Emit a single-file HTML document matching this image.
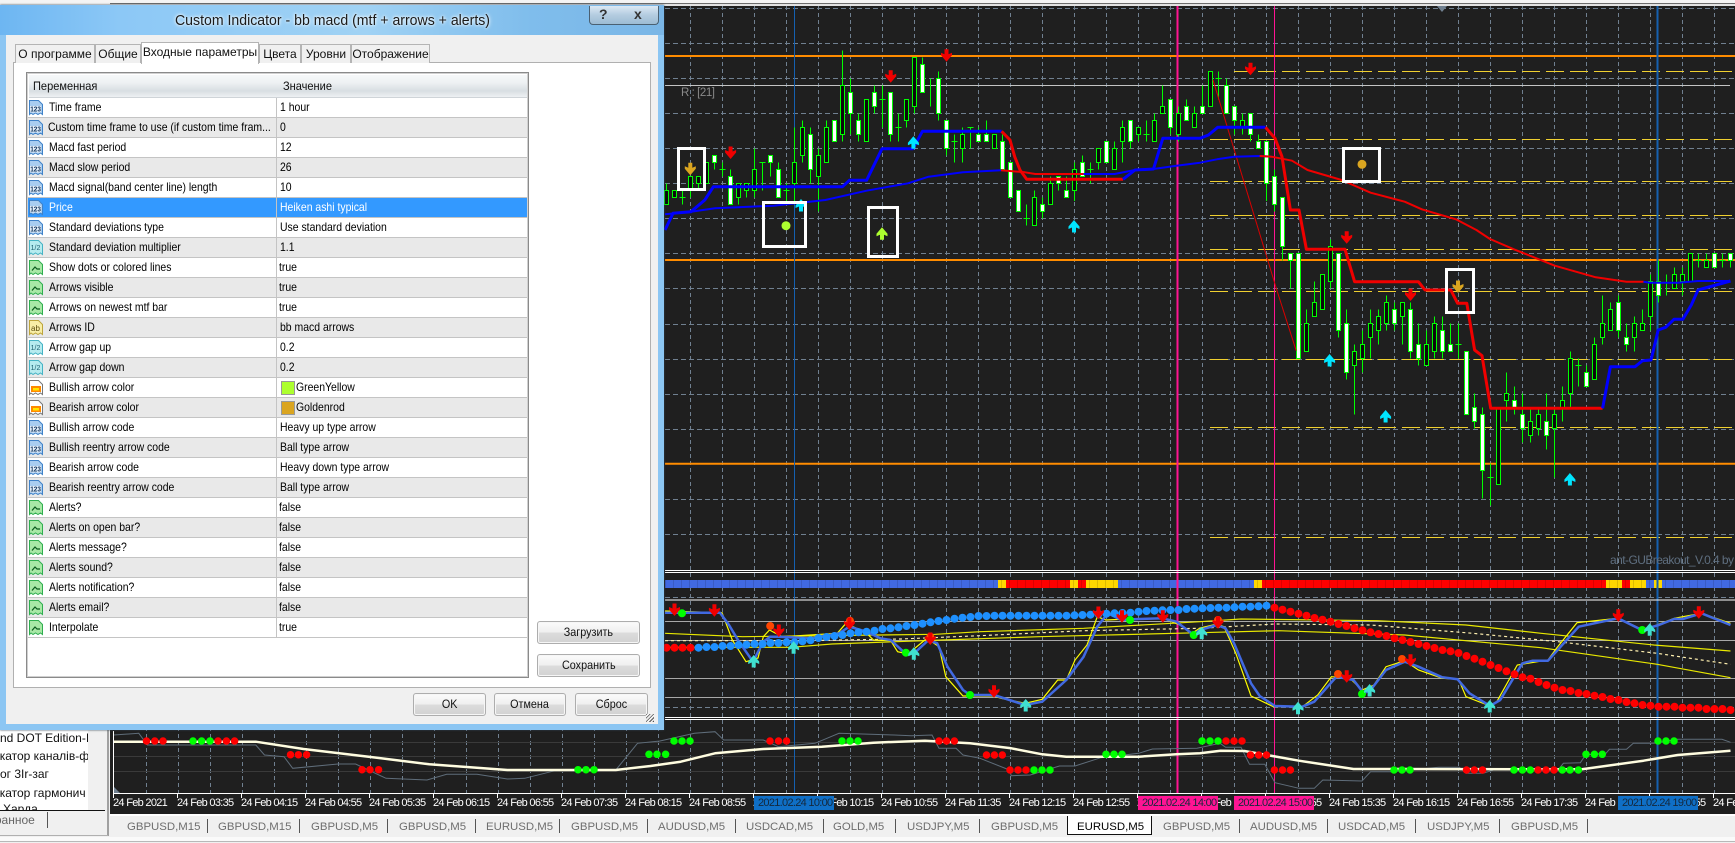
<!DOCTYPE html>
<html><head><meta charset="utf-8"><title>Custom Indicator</title>
<style>
html,body{margin:0;padding:0;width:1735px;height:843px;overflow:hidden;background:#f0f0f0;font-family:"Liberation Sans","Noto Sans CJK SC",sans-serif}
.a{position:absolute}
#dlg{position:absolute;left:0;top:5px;width:664px;height:725px;background:#8cc6f3;box-shadow:0 0 2px #345}
#tb{position:absolute;left:0;top:0;width:664px;height:30px;background:linear-gradient(90deg,#6db6f2 0,#8cc8f6 18%,#a0d2f4 55%,#7fbdec 80%,#7ab6e6 100%)}
#ttl{position:absolute;left:175px;top:6px;font-size:15px;line-height:20px;color:#1a1a1a;white-space:nowrap;transform:scaleX(.94);transform-origin:0 0;text-shadow:0 0 5px #fff,0 0 3px #fff}
#hb{position:absolute;left:589px;top:1px;width:68px;height:18px;border:1px solid #4a6072;border-top:none;border-radius:0 0 4px 4px;background:linear-gradient(#dce9f4,#b4cce0 50%,#9cbcd4);font:bold 14px/17px "Liberation Sans",sans-serif;color:#333}
#cl{position:absolute;left:6px;top:30px;width:652px;height:689px;background:#f0f0f0}
.tab{position:absolute;top:9px;height:18px;background:#f0f0f0;border:1px solid #b4b4b4;border-bottom:none;font-size:12px;line-height:18px;color:#111;text-align:center;white-space:nowrap}
#pane{position:absolute;left:7px;top:27px;width:636px;height:624px;background:#fff;border:1px solid #b0b0b0}
#tbl{position:absolute;left:12px;top:9px;width:501px;height:604px;border:1px solid #8a8a8a;outline:1px solid #d0d0d0;outline-offset:-2px;background:#fff;overflow:hidden}
#hd{position:absolute;left:2px;top:2px;width:498px;height:22px;background:linear-gradient(#f6f8f9,#eef1f3 35%,#d8dee2 72%,#eef1f3);border-bottom:1px solid #cfd4d8}
#hd span{position:absolute;top:3px;font-size:12px;line-height:17px;color:#111;transform:scaleX(.92);transform-origin:0 0}
#rows{position:absolute;left:1px;top:25px;width:499px}
.r{position:relative;height:19px;border-bottom:1px solid #c4c4c4;background:#fff;overflow:hidden}
.r.e{background:#e9e9e9}
.r.s{background:#3399ff;color:#fff}
.r i{position:absolute;left:248px;top:0;width:1px;height:20px;background:#c4c4c4}
.r svg{position:absolute;left:0;top:2px;width:16px;height:16px}
.r b,.r u{position:absolute;font-weight:normal;text-decoration:none;font-size:12px;line-height:19px;color:#000;white-space:nowrap;transform:scaleX(.87);transform-origin:0 0}
.r.s b,.r.s u{color:#fff}
.r b{left:21px}
.r u{left:252px}
.r u.f{left:251px}
.r u.c{left:268px}
.r em{position:absolute;left:253px;top:3px;width:12px;height:12px;border:1px solid #999}
.btn{position:absolute;background:linear-gradient(#fbfbfb,#efefef 48%,#dcdcdc 52%,#d2d2d2);border:1px solid #adadad;border-radius:3px;font-size:12px;color:#111;text-align:center;box-shadow:inset 0 0 0 1px #f6f6f6}
.btn span{display:inline-block;transform:scaleX(.9)}
#grip{position:absolute;left:640px;top:679px;width:8px;height:8px;background:repeating-linear-gradient(135deg,#555 0 1px,#f0f0f0 1px 2.5px)}
.nav{position:absolute;font-size:12px;line-height:16px;color:#111;white-space:nowrap}
.tl{position:absolute;top:818px;font-size:11.4px;line-height:18px;color:#6e6e6e;white-space:nowrap}
.sp{position:absolute;top:819px;width:1px;height:14px;background:#555}
svg text{font-family:"Liberation Sans",sans-serif}
</style></head><body>

<!-- top strip and left panel -->
<div class="a" style="left:0;top:0;width:1735px;height:2.5px;background:#f4f4f4"></div>
<div class="a" style="left:110px;top:2.5px;width:1625px;height:1.5px;background:#6c6c6c"></div>
<div class="a" style="left:110px;top:4px;width:1625px;height:2px;background:#e2e2e2"></div>
<div class="a" style="left:0;top:730px;width:88px;height:80px;background:#fff;overflow:hidden">
<div class="nav" style="left:0;top:0">nd DOT Edition-I</div>
<div class="nav" style="left:-7px;top:18px">икатор каналів-фо</div>
<div class="nav" style="left:0;top:36px">ог 3Ir-заг</div>
<div class="nav" style="left:-7px;top:55px">икатор гармонич</div>
<div class="nav" style="left:3px;top:71px">Харда</div>
</div>
<div class="a" style="left:0;top:810px;width:105px;height:1px;background:#111"></div>
<div class="nav" style="left:-12px;top:812px;color:#666">бранное</div>
<div class="a" style="left:47px;top:812px;width:1px;height:16px;background:#555"></div>
<div class="a" style="left:107px;top:730px;width:2px;height:106px;background:#a0a0a0"></div>
<div class="a" style="left:0;top:835px;width:108px;height:1px;background:#b0b0b0"></div>

<!-- chart -->
<svg class="a" style="left:0;top:0" width="1735" height="843" viewBox="0 0 1735 843">
<defs>
<pattern id="vg" patternUnits="userSpaceOnUse" x="146" y="6" width="32" height="7"><rect width="1" height="4" fill="#708090"/></pattern>
<pattern id="tk" patternUnits="userSpaceOnUse" x="113" y="793" width="64" height="5"><rect width="1" height="5" fill="#fff"/></pattern>
<pattern id="bk" patternUnits="userSpaceOnUse" x="665" y="580" width="8" height="8"><rect width="1" height="8" fill="#000" fill-opacity=".13"/></pattern>
<path id="d" d="M-2-6.500h4v5l3.500-1.500v2.500l-5.500 6.500-5.500-6.500v-2.500l3.500 1.500z"/>
<path id="up" d="M-2 6.500h4v-5l3.500 1.500v-2.500l-5.500-6.500-5.500 6.500v2.500l3.500-1.500z"/>
</defs>
<rect x="110" y="6" width="1625" height="808" fill="#1f1f1f"/>
<rect x="146" y="6" width="1589" height="787" fill="url(#vg)"/>
<path d="M665 8.500H1735M665 43.500H1735M665 78.500H1735M665 113.500H1735M665 148.500H1735M665 183.500H1735M665 218.500H1735M665 253.500H1735M665 288.500H1735M665 324.500H1735M665 359.500H1735M665 394.500H1735M665 429.500H1735M665 499.500H1735M665 534.500H1735M665 597.500H1735M665 707.500H1735" stroke="#708090" stroke-width="1" stroke-dasharray="5 3" fill="none"/>
<path d="M113 742.500H1735M113 756.500H1735M113 771.500H1735" stroke="#3a3a3a" fill="none"/>
<path d="M665 621.500H1735M665 640.500H1735M665 678.500H1735M665 697.500H1735" stroke="#a8a8a8" fill="none"/>
<path d="M1234 71.500H1732M1210 139.500H1732M1210 181.500H1732M1210 215.500H1732M1210 249.500H1732M1210 291.500H1732M1210 359.500H1732M1210 427.500H1732M1210 537.500H1732" stroke="#f0d030" stroke-dasharray="18 6" fill="none"/>
<path d="M665 56H1735M665 260H1735M665 463.700H1735" stroke="#ff8c00" stroke-width="2" fill="none"/>
<path d="M665 85.500H1730" stroke="#c4c4c4" fill="none"/>
<path d="M794.500 6V793" stroke="#1560b0" fill="none"/>
<path d="M1657.500 6V793" stroke="#1560b0" stroke-width="2" fill="none"/>
<path d="M1177.500 6V793" stroke="#ff1493" stroke-width="2" fill="none"/>
<path d="M1274.500 6V793" stroke="#ff1493" fill="none"/>
<path d="M1442 6h-5l5 6 5-6z" fill="#708090"/>

<!-- candles: y in price steps -->
<g transform="translate(0 50.5) scale(1 7)" shape-rendering="crispEdges">
<path vector-effect="non-scaling-stroke" fill="none" stroke="#0f0" d="M666.500 19V22M674.500 20V21M682.500 20V22M679.500 21H685.500M690.500 18V21M698.500 18V20M706.500 16V19M714.500 15V17M722.500 16V18M719.500 17H725.500M730.500 17V22M738.500 19V22M746.500 19V21M754.500 14V21M762.500 16V20M759.500 16H765.500M770.500 15V18M778.500 16V21M786.500 19V22M783.500 20H789.500M794.500 11V22M802.500 10V16M810.500 11V19M818.500 14V23M826.500 10V16M834.500 10V13M842.500 0V13M850.500 4V12M858.500 9V13M866.500 7V13M874.500 5V9M882.500 5V11M879.500 7H885.500M890.500 6V13M898.500 9V13M895.500 11H901.500M906.500 7V11M914.500 1V9M922.500 1V6M930.500 4V8M938.500 3V10M946.500 10V15M954.500 12V16M951.500 13H957.500M962.500 11V16M970.500 11V14M967.500 11H973.500M978.500 11V13M986.500 10V13M994.500 12V14M1002.500 12V17M1010.500 16V21M1018.500 20V23M1026.500 22V25M1023.500 24H1029.500M1034.500 20V25M1042.500 21V24M1050.500 18V22M1058.500 18V20M1066.500 18V21M1074.500 16V21.500M1082.500 15V18M1090.500 16V19M1087.500 17H1093.500M1098.500 14V17M1106.500 13V16M1114.500 13V17M1122.500 10V16M1130.500 10V14M1138.500 11V13M1146.500 10V13M1143.500 12H1149.500M1154.500 9V13M1162.500 5V9M1170.500 7V12M1178.500 8V13M1186.500 7V10M1194.500 8V11M1202.500 5V9M1210.500 3V8M1218.500 3V7M1215.500 4H1221.500M1226.500 4V9M1234.500 8V12M1242.500 9V12M1250.500 9V13M1258.500 12V14M1266.500 13V21.500M1274.500 17V23M1282.500 21V30M1290.500 29V34M1298.500 29V44M1306.500 37V43M1314.500 33V38M1322.500 32V37M1330.500 27V34M1338.500 29V41M1346.500 37V47M1354.500 42V52M1362.500 40V46M1370.500 37V44M1378.500 37V42M1386.500 35V40M1394.500 36V40M1402.500 36V42M1410.500 36V44M1418.500 39V45M1426.500 40V45M1434.500 38V44M1442.500 38V44M1450.500 39V43M1458.500 39V44M1455.500 42H1461.500M1466.500 43V52M1474.500 49V54M1482.500 51V64M1490.500 59V65M1487.500 61H1493.500M1498.500 51V62M1506.500 46V53M1514.500 48V52M1522.500 49V56M1530.500 51V56M1538.500 51V55M1546.500 49V57M1554.500 51V61M1562.500 48V53M1570.500 43V51M1578.500 44V48M1575.500 45H1581.500M1586.500 45V48M1594.500 41V47M1602.500 35V42M1610.500 36V40M1618.500 35V41M1626.500 39V43M1634.500 38V43M1642.500 37V40M1650.500 32V40M1658.500 30V36M1666.500 32V35M1674.500 31V34M1682.500 31V35M1690.500 29V33M1698.500 29V31M1695.500 30H1701.500M1706.500 29V31M1714.500 29V31M1722.500 29V31M1719.500 30H1725.500M1730.500 29V31"/>
<path vector-effect="non-scaling-stroke" fill="#fff" stroke="#0f0" d="M712.500 15h4V16h-4zM728.500 18h4V22h-4zM768.500 15h4V16h-4zM776.500 17h4V21h-4zM808.500 12h4V17h-4zM832.500 10h4V13h-4zM848.500 6h4V9h-4zM856.500 10h4V12h-4zM872.500 6h4V8h-4zM888.500 6h4V12h-4zM920.500 2h4V6h-4zM936.500 4h4V9h-4zM944.500 10h4V14h-4zM976.500 12h4V13h-4zM984.500 12h4V13h-4zM1000.500 13h4V17h-4zM1008.500 16h4V21h-4zM1016.500 20h4V23h-4zM1040.500 22h4V23h-4zM1056.500 18h4V19h-4zM1064.500 20h4V21h-4zM1080.500 16h4V18h-4zM1104.500 13h4V16h-4zM1128.500 10h4V13h-4zM1168.500 7h4V11h-4zM1184.500 8h4V10h-4zM1200.500 8h4V9h-4zM1224.500 5h4V9h-4zM1232.500 8h4V10h-4zM1248.500 9h4V12h-4zM1256.500 13h4V14h-4zM1264.500 13h4V19h-4zM1272.500 18h4V22h-4zM1280.500 21h4V28h-4zM1288.500 29h4V30h-4zM1296.500 29h4V44h-4zM1336.500 29h4V40h-4zM1344.500 39h4V46h-4zM1392.500 37h4V39h-4zM1408.500 37h4V43h-4zM1416.500 42h4V44h-4zM1440.500 40h4V43h-4zM1448.500 42h4V43h-4zM1464.500 43h4V52h-4zM1472.500 51h4V53h-4zM1480.500 52h4V60h-4zM1512.500 50h4V51h-4zM1520.500 52h4V54h-4zM1544.500 53h4V55h-4zM1584.500 46h4V48h-4zM1616.500 36h4V40h-4zM1624.500 41h4V42h-4zM1656.500 33h4V35h-4zM1712.500 29h4V31h-4zM1728.500 29h4V30h-4z"/>
<path vector-effect="non-scaling-stroke" fill="#0a0a0a" stroke="#0f0" d="M664.500 20h4V22h-4zM672.500 20h4V21h-4zM688.500 18h4V20h-4zM696.500 18h4V19h-4zM704.500 16h4V19h-4zM736.500 19h4V21h-4zM744.500 19h4V20h-4zM752.500 17h4V20h-4zM792.500 16h4V19h-4zM800.500 11h4V15h-4zM816.500 15h4V18h-4zM824.500 11h4V16h-4zM840.500 5h4V12h-4zM864.500 7h4V13h-4zM904.500 7h4V10h-4zM912.500 1h4V8h-4zM960.500 12h4V14h-4zM992.500 12h4V14h-4zM1032.500 21h4V25h-4zM1048.500 19h4V22h-4zM1072.500 17h4V20h-4zM1096.500 14h4V16h-4zM1112.500 14h4V17h-4zM1120.500 11h4V13h-4zM1136.500 11h4V12h-4zM1152.500 10h4V13h-4zM1160.500 8h4V9h-4zM1176.500 9h4V12h-4zM1192.500 9h4V11h-4zM1208.500 3h4V8h-4zM1240.500 10h4V11h-4zM1304.500 39h4V43h-4zM1312.500 36h4V38h-4zM1320.500 32h4V37h-4zM1328.500 28h4V33h-4zM1352.500 43h4V45h-4zM1360.500 42h4V44h-4zM1368.500 39h4V41h-4zM1376.500 38h4V40h-4zM1384.500 36h4V39h-4zM1400.500 36h4V38h-4zM1424.500 42h4V45h-4zM1432.500 39h4V43h-4zM1496.500 51h4V62h-4zM1504.500 49h4V50h-4zM1528.500 53h4V55h-4zM1536.500 52h4V54h-4zM1552.500 52h4V54h-4zM1560.500 50h4V51h-4zM1568.500 44h4V49h-4zM1592.500 42h4V47h-4zM1600.500 39h4V41h-4zM1608.500 37h4V40h-4zM1632.500 39h4V41h-4zM1640.500 39h4V40h-4zM1648.500 33h4V38h-4zM1672.500 32h4V34h-4zM1680.500 32h4V33h-4zM1688.500 29h4V33h-4zM1704.500 30h4V31h-4z"/>
</g>

<!-- main chart bands -->
<path d="M1213 80L1276.800 290L1296.200 350.700" stroke="#d80000" fill="none"/>
<g fill="none" stroke-linejoin="round">
<path stroke="#0000ff" stroke-width="2" d="M665 214.300L691 211.700L715 208.300L773.600 205.700L825.300 200L866.600 190.700L908 183.300L928.600 176.700L963 172.300L1001 170.300"/>
<path stroke="#f00000" stroke-width="2" d="M1001 170.300L1025 172.300L1035.300 174L1083.600 174"/>
<path stroke="#0000ff" stroke-width="2" d="M1083.600 174L1114.500 174L1135 170L1153.500 169L1176.500 165.700L1200 162.700L1217 159.300L1234 156.700L1259.700 156L1271.600 156.700"/>
<path stroke="#f00000" stroke-width="2" d="M1259.700 156L1271.600 156.700L1292 160.700L1307.500 170L1341.600 180L1370.600 192.700L1404.700 201.700L1421.800 209.300L1455.900 219.300L1476.400 230L1490 239L1513.900 249.300L1554.800 265.700L1595.800 277.300L1626.500 281.700L1643.500 281.700"/>
<path stroke="#0000ff" stroke-width="2" d="M1643.500 281.700L1650 282.700L1678 282.700L1698 281L1730 281"/>
<path stroke="#0000ff" stroke-width="3" d="M665 230L673 213.300L691 211.700L704.800 200L713.400 186.700L842.500 186.700L849.400 180.300L866.600 180.300L882 148.700L913 148.700L922.400 131.300L1001.600 131.300"/>
<path stroke="#f00000" stroke-width="3" d="M1001.600 131.300L1010 140L1014.700 156.700L1020 170L1026.700 179.300L1123 179.300"/>
<path stroke="#0000ff" stroke-width="3" d="M1123 179.300L1135 170L1153.500 169L1162.800 138.300L1200 138.300L1208.500 135L1217.700 127.300L1265.500 127.300"/>
<path stroke="#f00000" stroke-width="3" d="M1265.500 127.300L1275 138.300L1282 156.700L1290.400 210L1299 210L1306.400 249.300L1345 249.300L1354.600 281.700L1418.400 281.700L1425 290L1450.800 290L1457.600 303.300L1466.800 303.300L1474.600 350L1482 355.700L1490.700 408.300L1602.600 408.300"/>
<path stroke="#0000ff" stroke-width="3" d="M1602.600 408.300L1610.400 366.700L1635 366.700L1642.500 360.700L1651 360L1658.200 330L1665.700 327.300L1674 319.300L1682.800 319.300L1691.300 305L1698 290L1730.500 281"/>
</g>
<g fill="#f00000"><use href="#d" x="730.600" y="153"/><use href="#d" x="890.700" y="76.700"/><use href="#d" x="946.500" y="55.700"/><use href="#d" x="1250.500" y="69.300"/><use href="#d" x="1346.700" y="237.700"/><use href="#d" x="1410.500" y="295"/></g>
<g fill="#00e5ff"><use href="#up" x="913.400" y="142.300"/><use href="#up" x="801" y="205"/><use href="#up" x="1074" y="226"/><use href="#up" x="1329.600" y="360"/><use href="#up" x="1385.600" y="416"/><use href="#up" x="1569.900" y="479"/></g>
<g fill="none" stroke="#fff" stroke-width="3"><rect x="678.500" y="148.500" width="26" height="41"/><rect x="763.500" y="202.500" width="42" height="44"/><rect x="868.500" y="207.500" width="29" height="49"/><rect x="1343.500" y="148.500" width="36" height="33"/><rect x="1446.500" y="269.500" width="27" height="43"/></g>
<use href="#d" x="690.300" y="169.300" fill="#daa520"/><use href="#d" x="1458" y="287" fill="#daa520"/><use href="#up" x="882" y="233.300" fill="#adff2f"/>
<circle cx="786" cy="225.700" r="4.500" fill="#adff2f"/><circle cx="1362" cy="164.300" r="4.500" fill="#daa520"/>
<text x="681" y="96" font-size="11.500" fill="#8a8a8a" textLength="34">R : [21]</text>
<text x="1610" y="564" font-size="12" fill="#5f6f80" textLength="124">ant-GUBreakout_V.0.4 by</text>

<!-- separators and strip -->
<path d="M665 570.500H1735M665 572.500H1735M665 600H1735M665 717.500H1735M665 719.500H1735" stroke="#fff" fill="none"/>
<rect x="665" y="580" width="1070" height="8" fill="#4169e1"/>
<g fill="#ffd700"><rect x="998" y="580" width="8" height="8"/><rect x="1070" y="580" width="8" height="8"/><rect x="1086" y="580" width="32" height="8"/><rect x="1254" y="580" width="8" height="8"/><rect x="1606" y="580" width="16" height="8"/><rect x="1630" y="580" width="16" height="8"/><rect x="1654" y="580" width="8" height="8"/></g>
<g fill="#ff0000"><rect x="1006" y="580" width="64" height="8"/><rect x="1078" y="580" width="8" height="8"/><rect x="1262" y="580" width="344" height="8"/><rect x="1622" y="580" width="8" height="8"/></g>
<rect x="665" y="580" width="1070" height="8" fill="url(#bk)"/>
<path d="M1177.500 578V590" stroke="#ff1493" stroke-width="2"/><path d="M1657.500 578V590" stroke="#1560b0" stroke-width="2"/>

<!-- MACD window -->
<g fill="none" stroke="#e8e800" stroke-width="1.200">
<path d="M665 633.300L742.600 636.700L935.500 634.300L980 631.700L1083.600 628.300L1200 621.700L1241 619L1377.400 620.700L1466 625L1541.200 633.300L1653.800 645L1730.500 651"/>
<path d="M665 647.300L790.900 647.300L832 644L942.400 640L1038.800 636.700L1200 632.700L1278.500 630.700L1404.700 635L1541 647.700L1657.200 664.300L1730.500 677.700"/>
<path stroke="#fff0b0" stroke-dasharray="3 3" d="M665 640.700L797.700 640.700L901 639L980 635.700L1083.600 630.700L1200 628.300L1275 624L1370.600 625L1473 633.300L1558 641.700L1657 653.300L1730.500 664.300"/>
<path stroke="#ffff00" d="M665 611L722 612.700L732.300 640L746 661.700L758 658L763.300 636.700L769.500 630L782 636.700L837.300 633.300L846 623.300L866.600 633.300L873.500 640L890.700 640.700L897.600 651.700L908 654L926.900 638.300L939 646.700L945.800 676.700L963 696L994 696L1001 698.300L1025 703.300L1042.200 699.300L1057.700 680L1066.300 680L1075 660L1087 645L1097.300 616.700L1106 620L1128.300 619L1162.800 618.300L1180 625L1192 633.300L1200 628L1217 624L1224 626.700L1235.800 653.300L1251 696L1273.400 706.700L1302.400 706.700L1317.700 695L1331.400 676.700L1350 678.300L1362 690L1374 685L1386 666.700L1404.700 660.700L1418.400 670L1442.200 678.300L1458.600 679.300L1466 696.700L1490 706L1496.800 701.700L1517.300 665L1548 660L1556.500 648.300L1577 622.700L1618 618.300L1643.500 630L1674.200 618.300L1701.500 613.300L1730.500 623.300"/>
</g>
<path fill="none" stroke="#4169e1" stroke-width="2.500" stroke-linejoin="round" d="M665 612.700L720 612.700L729 625L739 641.700L753 661.700L763.300 641.700L770.200 636.700L778.800 636.700L811.500 638.300L839 633.300L849.400 626.700L866.600 631.700L880.400 638.300L890.700 640L904.500 652.700L914.800 652.700L928.600 640L937.200 643.300L947.500 666.700L963 690L970 695L994 695L1025 705L1042.200 701.700L1066.300 680L1083.600 656.700L1097.300 626.700L1107.700 613.300L1121.400 620L1138.700 619L1162.800 618.300L1176.500 621.700L1193.700 635L1200 630L1217 625L1225.600 628.300L1234 643.300L1251 683.300L1259.700 696L1275 706L1302.400 706.700L1314.300 701.700L1336.500 676.700L1353.500 680L1363.800 693.300L1370.600 690L1386 670L1404.700 661.700L1418.400 666.700L1442.200 677.300L1457.600 679.300L1469.500 693.300L1490 706L1500.200 700L1522.400 663.300L1532.700 660.700L1548 660.700L1578.700 626.700L1618 618.300L1641.800 630L1658.900 625L1674.200 619L1682.800 619L1701.500 613.300L1730.500 625"/>
<path fill="none" stroke="#ff0000" stroke-width="8" stroke-linecap="round" d="M666.500 647.700h0M674.500 647.700h0M682.500 647.700h0M690.500 647.700h0M1274.500 607.700h0M1282.500 609.700h0M1290.500 611.700h0M1298.500 613.700h0M1306.500 615.700h0M1314.500 618h0M1322.500 619.700h0M1330.500 621.700h0M1338.500 624h0M1346.500 626h0M1354.500 628.300h0M1362.500 630.300h0M1370.500 632.300h0M1378.500 634h0M1386.500 636h0M1394.500 638.300h0M1402.500 640h0M1410.500 642h0M1418.500 644h0M1426.500 646h0M1434.500 648h0M1442.500 650h0M1450.500 651.300h0M1458.500 653h0M1466.500 656h0M1474.500 658.700h0M1482.500 661.700h0M1490.500 665h0M1498.500 668h0M1506.500 671.300h0M1514.500 674.300h0M1522.500 677.300h0M1530.500 678.700h0M1538.500 682h0M1546.500 685h0M1554.500 687.700h0M1562.500 690h0M1570.500 691h0M1578.500 693h0M1586.500 694h0M1594.500 695.700h0M1602.500 697h0M1610.500 699h0M1618.500 700h0M1626.500 702h0M1634.500 703.300h0M1642.500 705h0M1650.500 705.700h0M1658.500 706.700h0M1666.500 706.700h0M1674.500 706.700h0M1682.500 707.700h0M1690.500 707.700h0M1698.500 707.700h0M1706.500 709h0M1714.500 709h0M1722.500 709h0M1730.500 710h0"/>
<path fill="none" stroke="#1e90ff" stroke-width="8" stroke-linecap="round" d="M698.500 647.700h0M706.500 647h0M714.500 647h0M722.500 646h0M730.500 646h0M738.500 645h0M746.500 644.700h0M754.500 644h0M762.500 644h0M770.500 643h0M778.500 643h0M786.500 642.300h0M794.500 642.300h0M802.500 641.300h0M810.500 640.300h0M818.500 638h0M826.500 637h0M834.500 636h0M842.500 635h0M850.500 633.300h0M858.500 632.300h0M866.500 631.700h0M874.500 630.700h0M882.500 629h0M890.500 628.300h0M898.500 627.300h0M906.500 626h0M914.500 625h0M922.500 623.700h0M930.500 622.300h0M938.500 621h0M946.500 620h0M954.500 618.700h0M962.500 617.700h0M970.500 617h0M978.500 616h0M986.500 616h0M994.500 615.700h0M1002.500 615.700h0M1010.500 615.700h0M1018.500 615.700h0M1026.500 615.700h0M1034.500 615.700h0M1042.500 615.700h0M1050.500 615.700h0M1058.500 615.700h0M1066.500 615.700h0M1074.500 615.300h0M1082.500 615h0M1090.500 614.700h0M1098.500 614h0M1106.500 613.700h0M1114.500 613.300h0M1122.500 613h0M1130.500 612.700h0M1138.500 611.700h0M1146.500 611h0M1154.500 610.700h0M1162.500 610.300h0M1170.500 610h0M1178.500 610h0M1186.500 609h0M1194.500 608.700h0M1202.500 608.300h0M1210.500 608h0M1218.500 607.700h0M1226.500 607.700h0M1234.500 607.300h0M1242.500 606.700h0M1250.500 606.700h0M1258.500 606.300h0M1266.500 605.700h0"/>
<path fill="none" stroke="#ff4500" stroke-width="8" stroke-linecap="round" d="M770.200 626h0M850 620.700h0M930.300 636.700h0M1218 620h0M1338 674h0M1402 659h0"/>
<path fill="none" stroke="#00ff00" stroke-width="8" stroke-linecap="round" d="M682 613.300h0M905.900 652.700h0M970 695h0M1130 620h0M1193.700 635h0M1362 694h0M1642.200 630h0"/>
<g fill="#f00000"><use href="#d" x="674.500" y="610"/><use href="#d" x="714.400" y="610.700"/><use href="#d" x="778.800" y="631"/><use href="#d" x="849.400" y="624"/><use href="#d" x="930.300" y="639"/><use href="#d" x="994" y="691.700"/><use href="#d" x="1098.400" y="613"/><use href="#d" x="1122" y="616.700"/><use href="#d" x="1162.800" y="616.700"/><use href="#d" x="1218" y="622.700"/><use href="#d" x="1346.700" y="676.700"/><use href="#d" x="1410.500" y="660.700"/><use href="#d" x="1618.300" y="615.700"/><use href="#d" x="1698.800" y="612.700"/></g>
<g fill="#40e0d0"><use href="#up" x="753.700" y="661"/><use href="#up" x="793.600" y="647.300"/><use href="#up" x="913.800" y="653.300"/><use href="#up" x="1025.700" y="705"/><use href="#up" x="1201.700" y="632.700"/><use href="#up" x="1298" y="707.700"/><use href="#up" x="1369.600" y="690"/><use href="#up" x="1489.700" y="706"/><use href="#up" x="1649.700" y="629.300"/></g>

<!-- lower window -->
<path fill="none" stroke="#5f6d7a" d="M113.600 735L138.800 733.300L147.400 745L255.800 745L264.500 755L284 756.700L292.700 768.300L338 764L355.600 764L386 778.300L427 780L446.700 774.300L477 774.300L507.400 779L524.700 778.300L555 770.700L615.800 770L637.500 743.300L660 741L694.400 733.300L715 731.700L723.700 740L763.300 740L778.500 746.700L815 743.300L839 733.300L894 735L911.400 735.700L932 735L939 748.300L956 748.300L963 755L980 758.300L1009.500 770L1011.200 775.700L1030.200 775L1059.400 766L1075 766L1100.800 757.700L1138.700 753.300L1152.400 749L1197 748.300L1220 743.300L1225.600 747.300L1241 747.300L1249.500 764.300L1264.800 764.300L1275 782.700L1299 788.300L1314.300 788.300L1322.800 780L1362 781L1370.600 771.700L1391 771.700L1438.800 767.300L1459.300 767.300L1466 773.300L1483 773.300L1493.400 770L1558 770L1563.400 763.300L1580.400 762.700L1585.500 755L1606 753.300L1609.400 749.300L1626.500 749.300L1633.300 743.300L1653.800 743.300L1677.700 739.300L1722 739.300L1730.500 742.300"/>
<path fill="none" stroke="#fffde0" stroke-width="2.500" stroke-linejoin="bevel" d="M113.600 741.700L255.800 741.700L303.500 749L368.600 756.700L429.300 764.300L507.400 770L615.800 770L650.500 766L680.700 761.700L715 753.300L763.300 749L821.800 746.700L873.500 742.700L925 740.700L970 743.300L1011.200 748.300L1042.200 754.300L1066.300 756.700L1138.700 756.700L1176.500 754.300L1200 753.300L1220.500 750.700L1244.400 751L1299 760.700L1353.500 769L1582 769.300L1643.500 760.700L1677.700 755L1730.500 750.700"/>
<path fill="none" stroke="#ff0000" stroke-width="7.500" stroke-linecap="round" d="M146.500 741h0M154.800 741h0M163 741h0M218 741h0M226.400 741h0M234.600 741h0M290.500 754.700h0M298.400 754.700h0M306.600 754.700h0M362 769.700h0M370 769.700h0M378.600 769.700h0M770 741h0M778.500 741h0M786.500 741h0M939 741h0M946.500 741h0M954.400 741h0M986.500 755h0M994.400 755h0M1002.300 755h0M1010 770h0M1018 770h0M1026 770h0M1226 741h0M1234 741h0M1242 741h0M1250.500 755h0M1258.700 755h0M1266.500 755h0M1274.400 770h0M1282.500 770h0M1290.400 770h0M1466.500 770h0M1474.300 770h0M1482.500 770h0M1538 770h0M1546 770h0M1554 770h0"/>
<path fill="none" stroke="#00ff00" stroke-width="7.500" stroke-linecap="round" d="M193 741h0M201.600 741h0M210 741h0M578 769.700h0M586 769.700h0M594 769.700h0M649 754.300h0M657 754.300h0M665.600 754.300h0M674 741h0M682 741h0M690 741h0M842 741h0M850 741h0M858 741h0M1034 770h0M1042 770h0M1050 770h0M1106 754.300h0M1114 754.300h0M1122 754.300h0M1202 741h0M1210 741h0M1218 741h0M1394 770h0M1402 770h0M1410 770h0M1514 770h0M1522.400 770h0M1530.300 770h0M1562.300 770h0M1570 770h0M1578.400 770h0M1586 754.300h0M1594.400 754.300h0M1602.300 754.300h0M1658 741h0M1666 741h0M1674 741h0"/>

<!-- axes -->
<path d="M113.500 731V793.500H1735" stroke="#fff" fill="none"/>
<path d="M114 787v6h6z" fill="#708090"/>
<rect x="113" y="793" width="1622" height="5" fill="url(#tk)"/>
<g font-size="11" fill="#fff" style="letter-spacing:-.7px">
<text x="113" y="806">24 Feb 2021</text><text x="177" y="806">24 Feb 03:35</text><text x="241" y="806">24 Feb 04:15</text><text x="305" y="806">24 Feb 04:55</text><text x="369" y="806">24 Feb 05:35</text><text x="433" y="806">24 Feb 06:15</text><text x="497" y="806">24 Feb 06:55</text><text x="561" y="806">24 Feb 07:35</text><text x="625" y="806">24 Feb 08:15</text><text x="689" y="806">24 Feb 08:55</text><text x="753" y="806">24 Feb 09:35</text><text x="817" y="806">24 Feb 10:15</text><text x="881" y="806">24 Feb 10:55</text><text x="945" y="806">24 Feb 11:35</text><text x="1009" y="806">24 Feb 12:15</text><text x="1073" y="806">24 Feb 12:55</text><text x="1137" y="806">24 Feb 13:35</text><text x="1201" y="806">24 Feb 14:15</text><text x="1265" y="806">24 Feb 14:55</text><text x="1329" y="806">24 Feb 15:35</text><text x="1393" y="806">24 Feb 16:15</text><text x="1457" y="806">24 Feb 16:55</text><text x="1521" y="806">24 Feb 17:35</text><text x="1585" y="806">24 Feb 18:15</text><text x="1649" y="806">24 Feb 18:55</text><text x="1713" y="806">24 Feb 19:35</text>
</g>
<g font-size="11" fill="#14283c" style="letter-spacing:-.7px">
<rect x="754" y="796" width="80" height="14" fill="#0f6fc6"/><text x="758" y="806">2021.02.24 10:00</text>
<rect x="1138" y="796" width="80" height="14" fill="#ff1493"/><text x="1142" y="806">2021.02.24 14:00</text>
<rect x="1234" y="796" width="80" height="14" fill="#ff1493"/><text x="1238" y="806">2021.02.24 15:00</text>
<rect x="1618" y="796" width="80" height="14" fill="#0f6fc6"/><text x="1622" y="806">2021.02.24 19:00</text>
</g>
</svg>

<!-- bottom tab bar -->
<div class="a" style="left:110px;top:814px;width:1625px;height:2px;background:#fff"></div>
<div class="a" style="left:110px;top:816px;width:1625px;height:21px;background:#f0f0f0"></div>
<div class="a" style="left:0;top:837px;width:1735px;height:5px;background:#fafafa"></div>
<div class="a" style="left:0;top:841px;width:1735px;height:1px;background:#b8b8b8"></div>
<div class="tl" style="left:127px">GBPUSD,M15</div><div class="sp" style="left:207px"></div>
<div class="tl" style="left:218px">GBPUSD,M15</div><div class="sp" style="left:299px"></div>
<div class="tl" style="left:311px">GBPUSD,M5</div><div class="sp" style="left:387px"></div>
<div class="tl" style="left:399px">GBPUSD,M5</div><div class="sp" style="left:475px"></div>
<div class="tl" style="left:486px">EURUSD,M5</div><div class="sp" style="left:559px"></div>
<div class="tl" style="left:571px">GBPUSD,M5</div><div class="sp" style="left:647px"></div>
<div class="tl" style="left:658px">AUDUSD,M5</div><div class="sp" style="left:735px"></div>
<div class="tl" style="left:746px">USDCAD,M5</div><div class="sp" style="left:823px"></div>
<div class="tl" style="left:833px">GOLD,M5</div><div class="sp" style="left:895px"></div>
<div class="tl" style="left:907px">USDJPY,M5</div><div class="sp" style="left:979px"></div>
<div class="tl" style="left:991px">GBPUSD,M5</div>
<div class="a" style="left:1067px;top:816px;width:83px;height:18px;background:#fff;border:1px solid #111;border-top:none"></div>
<div class="tl" style="left:1077px;color:#000">EURUSD,M5</div>
<div class="tl" style="left:1163px">GBPUSD,M5</div><div class="sp" style="left:1239px"></div>
<div class="tl" style="left:1250px">AUDUSD,M5</div><div class="sp" style="left:1327px"></div>
<div class="tl" style="left:1338px">USDCAD,M5</div><div class="sp" style="left:1415px"></div>
<div class="tl" style="left:1427px">USDJPY,M5</div><div class="sp" style="left:1499px"></div>
<div class="tl" style="left:1511px">GBPUSD,M5</div><div class="sp" style="left:1587px"></div>

<!-- icon symbols -->
<svg width="0" height="0" style="position:absolute"><defs>
<path id="doc" d="M1.500 .500h9l4 4v10l-2-1.500-2.500 1.500-2.500-1.500-2.500 1.500-2-1.500-1.500 1.500z"/>
<symbol id="n" viewBox="0 0 16 16"><use href="#doc" fill="#a9cdf0" stroke="#3f82c8"/><rect x="2" y="6" width="11" height="6.500" fill="#e4effa"/><text x="2.200" y="11.700" font-size="7" font-weight="bold" textLength="10.800" lengthAdjust="spacingAndGlyphs" fill="#12345c">123</text></symbol>
<symbol id="h" viewBox="0 0 16 16"><use href="#doc" fill="#b6ebef" stroke="#46b3c4"/><text x="7.500" y="10" font-size="7" text-anchor="middle" fill="#1d5f70">1/2</text></symbol>
<symbol id="o" viewBox="0 0 16 16"><use href="#doc" fill="#a8e8a6" stroke="#2fae50"/><path d="M4 10.500l3-3.500 2 2h3" fill="none" stroke="#0b5a1e" stroke-width="1.200"/></symbol>
<symbol id="y" viewBox="0 0 16 16"><use href="#doc" fill="#f8eea6" stroke="#bda53c"/><text x="7.500" y="11" font-size="8" text-anchor="middle" fill="#5c4c0c">ab</text></symbol>
<symbol id="k" viewBox="0 0 16 16"><use href="#doc" fill="#fff" stroke="#777"/><rect x="3" y="6" width="10" height="6" fill="#ff8a00"/><rect x="5" y="8" width="6" height="2.500" fill="#ffe600"/></symbol>
</defs></svg>

<!-- dialog -->
<div id="dlg">
<div id="tb"></div>
<div id="ttl">Custom Indicator - bb macd (mtf + arrows + alerts)</div>
<div id="hb"><span class="a" style="left:9px;top:0">?</span><span class="a" style="left:44px;top:0">x</span></div>
<div id="cl">
<div id="pane">
<div id="tbl">
<div id="hd"><span style="left:4px">Переменная</span><span style="left:254px">Значение</span></div>
<div id="rows">
<div class="r"><i></i><svg><use href="#n"/></svg><b>Time frame</b><u>1 hour</u></div>
<div class="r e"><i></i><svg><use href="#n"/></svg><b style="left:20px">Custom time frame to use (if custom time fram...</b><u>0</u></div>
<div class="r"><i></i><svg><use href="#n"/></svg><b>Macd fast period</b><u>12</u></div>
<div class="r e"><i></i><svg><use href="#n"/></svg><b>Macd slow period</b><u>26</u></div>
<div class="r"><i></i><svg><use href="#n"/></svg><b>Macd signal(band center line) length</b><u>10</u></div>
<div class="r s"><i></i><svg><use href="#n"/></svg><b>Price</b><u>Heiken ashi typical</u></div>
<div class="r"><i></i><svg><use href="#n"/></svg><b>Standard deviations type</b><u>Use standard deviation</u></div>
<div class="r e"><i></i><svg><use href="#h"/></svg><b>Standard deviation multiplier</b><u>1.1</u></div>
<div class="r"><i></i><svg><use href="#o"/></svg><b>Show dots or colored lines</b><u class="f">true</u></div>
<div class="r e"><i></i><svg><use href="#o"/></svg><b>Arrows visible</b><u class="f">true</u></div>
<div class="r"><i></i><svg><use href="#o"/></svg><b>Arrows on newest mtf bar</b><u class="f">true</u></div>
<div class="r e"><i></i><svg><use href="#y"/></svg><b>Arrows ID</b><u>bb macd arrows</u></div>
<div class="r"><i></i><svg><use href="#h"/></svg><b>Arrow gap up</b><u>0.2</u></div>
<div class="r e"><i></i><svg><use href="#h"/></svg><b>Arrow gap down</b><u>0.2</u></div>
<div class="r"><i></i><svg><use href="#k"/></svg><b>Bullish arrow color</b><em style="background:#adff2f"></em><u class="c">GreenYellow</u></div>
<div class="r e"><i></i><svg><use href="#k"/></svg><b>Bearish arrow color</b><em style="background:#daa520"></em><u class="c">Goldenrod</u></div>
<div class="r"><i></i><svg><use href="#n"/></svg><b>Bullish arrow code</b><u>Heavy up type arrow</u></div>
<div class="r e"><i></i><svg><use href="#n"/></svg><b>Bullish reentry arrow code</b><u>Ball type arrow</u></div>
<div class="r"><i></i><svg><use href="#n"/></svg><b>Bearish arrow code</b><u>Heavy down type arrow</u></div>
<div class="r e"><i></i><svg><use href="#n"/></svg><b>Bearish reentry arrow code</b><u>Ball type arrow</u></div>
<div class="r"><i></i><svg><use href="#o"/></svg><b>Alerts?</b><u class="f">false</u></div>
<div class="r e"><i></i><svg><use href="#o"/></svg><b>Alerts on open bar?</b><u class="f">false</u></div>
<div class="r"><i></i><svg><use href="#o"/></svg><b>Alerts message?</b><u class="f">false</u></div>
<div class="r e"><i></i><svg><use href="#o"/></svg><b>Alerts sound?</b><u class="f">false</u></div>
<div class="r"><i></i><svg><use href="#o"/></svg><b>Alerts notification?</b><u class="f">false</u></div>
<div class="r e"><i></i><svg><use href="#o"/></svg><b>Alerts email?</b><u class="f">false</u></div>
<div class="r"><i></i><svg><use href="#o"/></svg><b>Interpolate</b><u class="f">true</u></div>
</div>
</div>
<div class="btn" style="left:523px;top:558px;width:101px;height:21px;line-height:21px"><span>Загрузить</span></div>
<div class="btn" style="left:523px;top:591px;width:101px;height:21px;line-height:21px"><span>Сохранить</span></div>
</div>
<div class="tab" style="left:9px;width:78px">О программе</div>
<div class="tab" style="left:89px;width:44px">Общие</div>
<div class="tab" style="left:135px;top:7px;width:116px;height:21px;background:#fff;line-height:19px;z-index:2">Входные параметры</div>
<div class="tab" style="left:253px;width:40px">Цвета</div>
<div class="tab" style="left:295px;width:48px">Уровни</div>
<div class="tab" style="left:345px;width:77px">Отображение</div>
<div class="btn" style="left:407px;top:658px;width:71px;height:21px;line-height:21px"><span>OK</span></div>
<div class="btn" style="left:488px;top:658px;width:70px;height:21px;line-height:21px"><span>Отмена</span></div>
<div class="btn" style="left:569px;top:658px;width:71px;height:21px;line-height:21px"><span>Сброс</span></div>
<div id="grip"></div>
</div>
</div>
</body></html>
